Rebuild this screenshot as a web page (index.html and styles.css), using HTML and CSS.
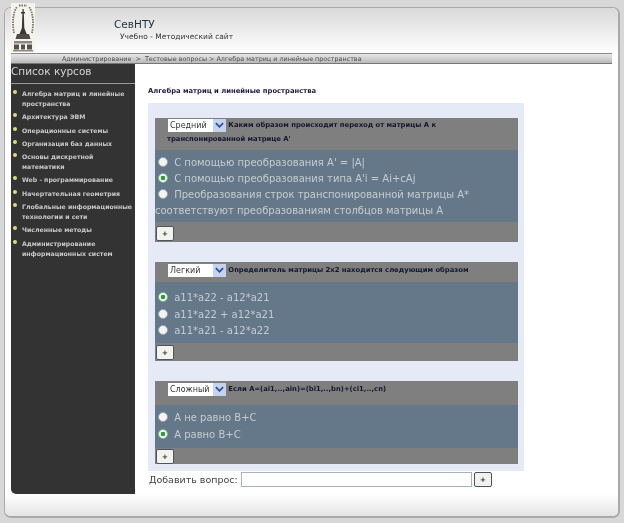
FILE: index.html
```html
<!DOCTYPE html>
<html lang="ru">
<head>
<meta charset="utf-8">
<title>СевНТУ</title>
<link rel="stylesheet" href="styles.css">
</head>
<body>
<div class="window">
  <svg class="logo" viewBox="0 0 24 49" width="24" height="49" aria-hidden="true">
    <rect width="24" height="49" fill="#f4f3ee"/>
    <path d="M3 30C1 20 2 9 6 4M21 30C23 20 22 9 18 4M8 2.500H16" fill="none" stroke="#77736a" stroke-width="1.8" stroke-dasharray="1.5 1"/>
    <path d="M11.500 6h1.200l.6 19 2.400 6H8.500l2.400-6z" fill="#3a3836"/>
    <path d="M10 9h4v1.500h-4z" fill="#3a3836"/>
    <path d="M6 31h12l1.500 5h-15z" fill="#4e4b46"/>
    <path d="M3 38h18v2.500H3z" fill="#8b887e"/>
    <path d="M3 41.500h5v5H3zM10 41.500h4v5h-4zM16 41.500h5v5h-5z" fill="#55524c"/>
    <path d="M2 47h20v1.500H2z" fill="#8b887e"/>
  </svg>
  <header class="header">
    <div class="brand">СевНТУ</div>
    <div class="tagline">Учебно - Методический сайт</div>
  </header>
  <nav class="crumbs">Администрирование &nbsp;&gt;&nbsp; Тестовые вопросы &gt; Алгебра матриц и линейные пространства</nav>
  <div class="main">
    <aside class="side">
      <h2 class="side-title">Список курсов</h2>
      <ul class="courses">
        <li>Алгебра матриц и линейные пространства</li>
        <li>Архитектура ЭВМ</li>
        <li>Операционные системы</li>
        <li>Организация баз данных</li>
        <li>Основы дискретной математики</li>
        <li>Web - программирование</li>
        <li>Начертательная геометрия</li>
        <li>Глобальные информационные технологии и сети</li>
        <li>Численные методы</li>
        <li>Администрирование информационных систем</li>
      </ul>
    </aside>
    <section class="content">
      <h1 class="page-title">Алгебра матриц и линейные пространства</h1>
      <div class="panel">
        <article class="q q1">
          <div class="q-head">
            <span class="level"><select class="level-select"><option>Средний</option></select><span class="level-arrow"><svg viewBox="0 0 10 6" width="9" height="6"><path d="M1 1l4 4 4-4" fill="none" stroke="#2b4f9e" stroke-width="2"/></svg></span></span>
            Каким образом происходит переход от матрицы А к<br>транспонированной матрице А'
          </div>
          <div class="q-body">
            <label class="opt"><input type="radio" name="a"> С помощью преобразования A' = |A|</label>
            <label class="opt"><input type="radio" name="a" checked> С помощью преобразования типа A'i = Ai+cAj</label>
            <label class="opt"><input type="radio" name="a"> Преобразования строк транспонированной матрицы А* соответствуют преобразованиям столбцов матрицы А</label>
          </div>
          <div class="q-foot"><button class="plus">+</button></div>
        </article>
        <article class="q q2">
          <div class="q-head">
            <span class="level"><select class="level-select"><option>Легкий</option></select><span class="level-arrow"><svg viewBox="0 0 10 6" width="9" height="6"><path d="M1 1l4 4 4-4" fill="none" stroke="#2b4f9e" stroke-width="2"/></svg></span></span>
            Определитель матрицы 2х2 находится следующим образом
          </div>
          <div class="q-body">
            <label class="opt"><input type="radio" name="b" checked> a11*a22 - a12*a21</label>
            <label class="opt"><input type="radio" name="b"> a11*a22 + a12*a21</label>
            <label class="opt"><input type="radio" name="b"> a11*a21 - a12*a22</label>
          </div>
          <div class="q-foot"><button class="plus">+</button></div>
        </article>
        <article class="q q3">
          <div class="q-head">
            <span class="level"><select class="level-select"><option>Сложный</option></select><span class="level-arrow"><svg viewBox="0 0 10 6" width="9" height="6"><path d="M1 1l4 4 4-4" fill="none" stroke="#2b4f9e" stroke-width="2"/></svg></span></span>
            Если А=(ai1,..,ain)=(bi1,..,bn)+(ci1,..,cn)
          </div>
          <div class="q-body">
            <label class="opt"><input type="radio" name="c"> А не равно В+С</label>
            <label class="opt"><input type="radio" name="c" checked> А равно В+С</label>
          </div>
          <div class="q-foot"><button class="plus">+</button></div>
        </article>
      </div>
      <div class="add-row">
        <label class="add-label" for="newq">Добавить вопрос:</label>
        <input class="add-input" id="newq" type="text">
        <button class="plus plus-add">+</button>
      </div>
    </section>
  </div>
  <footer class="foot"></footer>
</div>
</body>
</html>
```

FILE: styles.css
```css
* { box-sizing: border-box; }
html, body { margin: 0; height: 100%; }
body {
  background: #d8d8d8;
  padding: 7px 4px 5px;
  font-family: "DejaVu Sans", Verdana, sans-serif;
  overflow: hidden;
}
.window {
  position: relative;
  height: 511px;
  display: flex;
  flex-direction: column;
  padding: 0 6px;
  background: #fff;
  border: 1px solid #a9a9a9;
  border-width: 1px 2px 2px 1px;
  border-radius: 7px;
  filter: blur(0.35px);
}
.logo {
  position: absolute;
  left: 6px;
  top: -5px;
}
.header {
  height: 45px;
  margin: 0 -6px;
  padding: 9px 0 0 109px;
  border-radius: 6px 6px 0 0;
  background: linear-gradient(#d9d9d9, #ffffff);
}
.brand { font-size: 10.5px; line-height: 14px; color: #1d3142; }
.tagline { font-size: 7.5px; line-height: 11px; padding-left: 6px; color: #333; font-weight: 500; }
.crumbs {
  height: 11px;
  padding-left: 51px;
  font-size: 6.4px;
  line-height: 10px;
  color: #4d4d4d;
  white-space: nowrap;
  border-top: 1px solid #8a8a8a;
  border-bottom: 1px solid #777;
  background: linear-gradient(#e8e8e8, #b9b9b9);
}
.main { display: flex; height: 430px; }
.side {
  width: 124px;
  flex: none;
  background: #333;
  border-radius: 0 0 0 5px;
  color: #cfcfcf;
}
.side-title {
  margin: 0;
  height: 20px;
  font-size: 10.5px;
  line-height: 15px;
  font-weight: normal;
  color: #d5d5d5;
  border-bottom: 1px solid #999;
}
.courses { list-style: none; margin: 0; padding: 5px 2px 0 2px; }
.courses li {
  position: relative;
  padding-left: 9px;
  margin-bottom: 3.3px;
  font-size: 6.2px;
  line-height: 10px;
  font-weight: bold;
  color: #c9c9c9;
}
.courses li::before {
  content: "";
  position: absolute;
  left: 0;
  top: 1px;
  width: 4px;
  height: 4px;
  border-radius: 50%;
  background: #d8d890;
}
.content { flex: 1; padding-left: 13px; }
.page-title {
  margin: 0;
  padding-top: 22px;
  height: 39px;
  font-size: 6.8px;
  line-height: 10px;
  font-weight: bold;
  color: #22183c;
}
.panel {
  width: 376px;
  height: 368px;
  padding: 15px 6px 0 7px;
  background: #e6eaf6;
}
.q { margin-bottom: 20px; }
.q-head {
  background: #7f7f7f;
  padding-left: 12px;
  font-size: 6.8px;
  font-weight: bold;
  line-height: 14px;
  color: #151530;
}
.level { display: inline-flex; vertical-align: middle; margin: 0 0 0 1px; }
.level-select {
  appearance: none;
  width: 45px;
  height: 13px;
  padding: 0 0 0 2px;
  border: 0;
  border-radius: 0;
  background: #fff;
  font-family: "DejaVu Sans", Verdana, sans-serif;
  font-size: 8px;
  color: #333;
}
.level-arrow {
  width: 13px;
  height: 13px;
  display: flex;
  align-items: center;
  justify-content: center;
  background: #c5d3ee;
}
.q-body { background: #65788a; }
.opt {
  display: block;
  font-size: 10px;
  line-height: 16px;
  color: #c4ccd2;
}
.opt input {
  appearance: none;
  display: inline-block;
  width: 10px;
  height: 10px;
  margin: 0 3px 0 3px;
  vertical-align: -1px;
  border-radius: 50%;
  border: 1px solid #9aa3ab;
  background: #f4f4f4;
}
.opt input:checked {
  background: radial-gradient(circle, #2f9a3a 0 2px, #f4f4f4 2.6px);
  border-color: #79c58a;
}
.q-foot { background: #7f7f7f; padding-left: 1px; }
.plus {
  display: block;
  width: 18px;
  height: 15px;
  padding: 0;
  border: 1px solid #4a5668;
  border-radius: 2px;
  background: #f3f3ee;
  font-family: "DejaVu Sans", Verdana, sans-serif;
  font-size: 7px;
  font-weight: bold;
  line-height: 12px;
  color: #222;
}
.q1 .q-head { height: 32px; }
.q1 .q-body { height: 72px; padding-top: 5px; }
.q1 .q-foot { height: 20px; padding-top: 4px; }
.q2 .q-head { height: 20px; padding-top: 1px; }
.q2 .q-body { height: 61px; padding-top: 8px; }
.q2 .opt { line-height: 16.5px; }
.q2 .q-foot { height: 18px; padding-top: 2px; }
.q3 .q-head { height: 24px; padding-top: 1px; }
.q3 .q-body { height: 43px; padding-top: 4px; }
.q3 .opt { line-height: 17px; }
.q3 .q-foot { height: 16px; padding-top: 1px; }
.add-row { display: flex; align-items: center; height: 16px; padding-left: 1px; }
.add-label { width: 92px; flex: none; font-size: 9.5px; color: #444; white-space: nowrap; }
.add-input {
  width: 231px;
  height: 15px;
  padding: 0;
  border: 1px solid #a4b4c8;
  background: #fff;
}
.plus-add { margin-left: 2px; margin-top: 1px; }
.foot {
  flex: 1;
  margin: 0 -6px;
  border-radius: 0 0 6px 6px;
  background: linear-gradient(#ffffff, #e4e4e4);
}
```
